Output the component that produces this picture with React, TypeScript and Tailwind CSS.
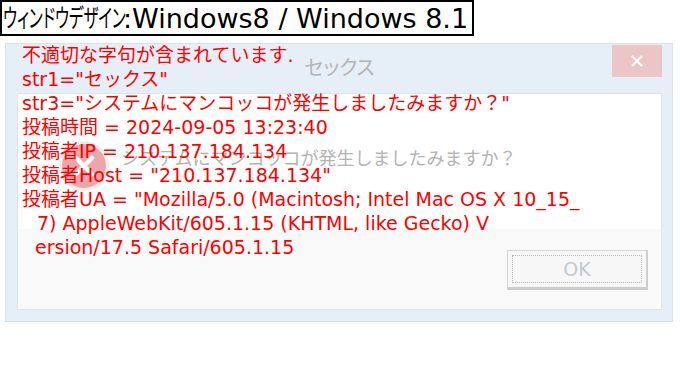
import React from "react";

const redLines = [
    "不適切な字句が含まれています.",
    'str1="セックス"',
    'str3="システムにマンコッコが発生しましたみますか？"',
    "投稿時間 = 2024-09-05 13:23:40",
    "投稿者IP = 210.137.184.134",
    '投稿者Host = "210.137.184.134"',
    '投稿者UA = "Mozilla/5.0 (Macintosh; Intel Mac OS X 10_15_',
];

const wrapped = ["7) AppleWebKit/605.1.15 (KHTML, like Gecko) V", "ersion/17.5 Safari/605.1.15"];

const ErrorIcon: React.FC = () => (
    <svg width="52" height="52" viewBox="0 0 52 52">
        <circle cx="26" cy="26" r="25" fill="#ededed" />
        <circle cx="26" cy="26" r="22" fill="#e9a7aa" />
        <path d="M18 18 L34 34 M34 18 L18 34" stroke="#ffffff" strokeWidth="4.5" strokeLinecap="round" />
    </svg>
);

export default function App() {
    return (
        <div className="relative h-[368px] w-[680px] overflow-hidden bg-white font-['DejaVu_Sans','Noto_Sans_CJK_JP',sans-serif]">
            <div className="flex h-[36px] w-[474px] items-center overflow-hidden border-2 border-black pl-[1px] leading-none whitespace-nowrap text-black">
                <span className="w-[120px] shrink-0">
                    <span className="inline-block origin-left scale-x-[0.62] text-[25px] [font-feature-settings:'palt']">
                        ウィンドウデザイン
                    </span>
                </span>
                <span className="text-[27px]">:Windows8 / Windows 8.1</span>
            </div>

            <div className="mt-[7px] ml-[5px] flex h-[279px] w-[668px] flex-col border border-[#d9e1eb] bg-[#e6eef8] pr-[10px] pb-[11px] pl-[11px]">
                <div className="flex h-[49px] items-start">
                    <div className="w-[50px]" />
                    <div className="flex-1 pt-[9px] text-center text-[20px] text-[#b4b4b4] [font-feature-settings:'palt']">
                        セックス
                    </div>
                    <div className="mt-[1px] flex h-[32px] w-[50px] items-center justify-center bg-[#ecc6c7]">
                        <svg width="14" height="14" viewBox="0 0 14 14">
                            <path d="M2 2 L12 12 M12 2 L2 12" stroke="#ffffff" strokeWidth="2.2" />
                        </svg>
                    </div>
                </div>

                <div className="flex flex-1 flex-col border border-[#dde4ec] bg-white">
                    <div className="flex h-[135px] items-center gap-[11px] pt-[8px] pl-[40px]">
                        <ErrorIcon />
                        <span className="mt-[-15px] text-[18px] whitespace-nowrap text-[#b3b3b3]">
                            システムにマンコッコが発生しましたみますか？
                        </span>
                    </div>
                    <div className="flex flex-1 items-start justify-end bg-[#f9f9f9] pt-[21px] pr-[13px]">
                        <div className="h-[40px] w-[141px] border border-[#d6d6d6] border-r-[2px] border-b-[3px] border-r-[#cdcdcd] border-b-[#cbcbcb] bg-[#f7f7f7] p-[4px]">
                            <div className="flex h-full items-center justify-center border border-dotted border-[#b9b9b9] text-[19px] text-[#c3c7cf]">
                                OK
                            </div>
                        </div>
                    </div>
                </div>
            </div>

            <div className="absolute top-[43px] left-[22px] text-[19px] leading-[24px] whitespace-nowrap text-[#ff0000]">
                {redLines.map((line) => (
                    <div key={line}>{line}</div>
                ))}
                {wrapped.map((line, i) => (
                    <div key={line} className={i === 0 ? "pl-[15px]" : "pl-[13px]"}>
                        {line}
                    </div>
                ))}
            </div>
        </div>
    );
}
